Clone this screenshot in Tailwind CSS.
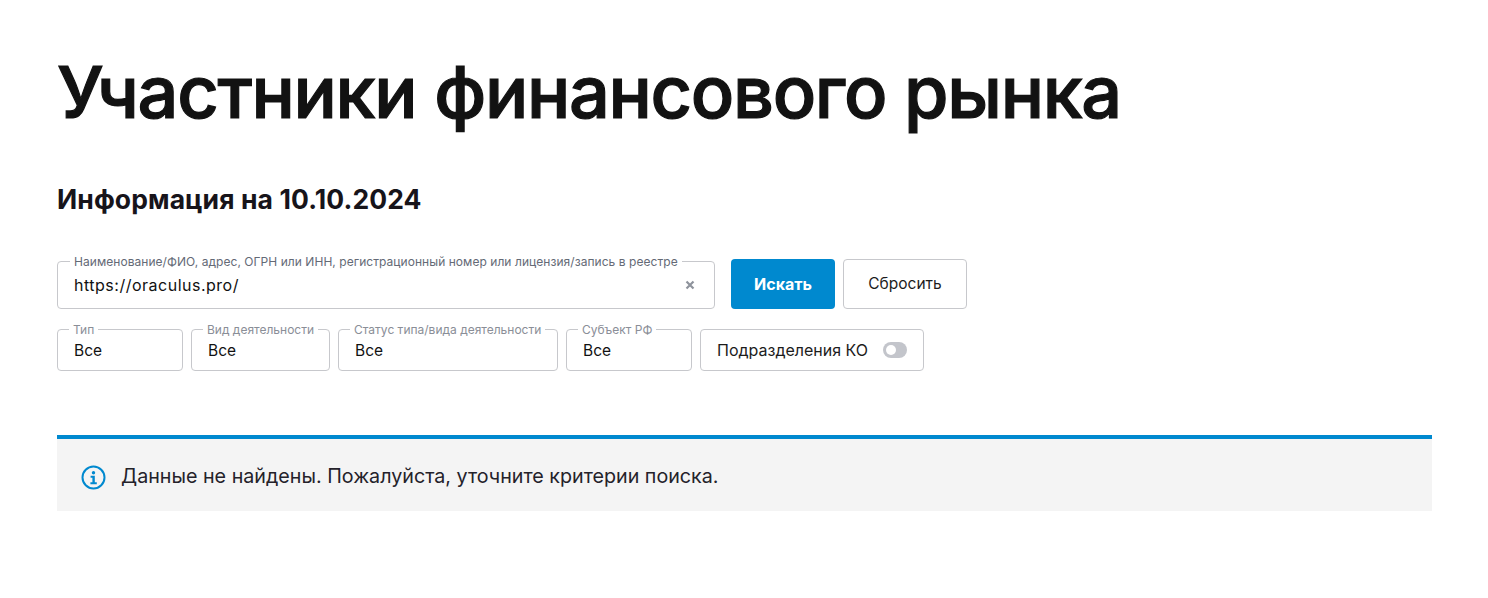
<!DOCTYPE html>
<html lang="ru">
<head>
<meta charset="utf-8">
<script src="https://cdn.jsdelivr.net/npm/@tailwindcss/browser@4"></script>
</head>
<body class="bg-white font-['Inter','Noto_Sans',sans-serif] text-[#111]">
<main class="w-[1488px] h-[598px] overflow-hidden pl-[57px] pr-[56px]">
  <h1 class="pt-[50px] h-[132px] text-[72px] leading-[84px] font-medium [-webkit-text-stroke:1.2px_#121212] text-[#121212] tracking-[-1.3px] whitespace-nowrap">Участники финансового рынка</h1>
  <h2 class="mt-[49px] h-[36px] text-[26.5px] leading-[36px] font-bold text-[#17141a] tracking-[0.1px] whitespace-nowrap">Информация на 10.10.2024</h2>
  <div class="mt-[42px] flex items-end h-[50px]">
    <div class="relative w-[658px] h-[48px] border border-[#c7c8cc] rounded-[4px]">
      <span class="absolute left-[12px] -top-[7px] bg-white px-[4px] text-[12px] tracking-[0.05px] leading-[14px] text-[#646a76] whitespace-nowrap">Наименование/ФИО, адрес, ОГРН или ИНН, регистрационный номер или лицензия/запись в реестре</span>
      <span class="absolute left-[16px] top-[13px] text-[16px] tracking-[0.5px] leading-[20px] text-[#111]">https://oraculus.pro/</span>
      <svg class="absolute left-[627px] top-[18px]" width="10" height="10" viewBox="0 0 10 10"><path d="M1.5 1.5l7 7M8.5 1.5l-7 7" stroke="#8e939c" stroke-width="2.2"/></svg>
    </div>
    <button class="ml-[16px] w-[104px] h-[50px] rounded-[4px] bg-[#0089cf] text-white text-[16px] font-bold">Искать</button>
    <button class="ml-[8px] w-[124px] h-[50px] rounded-[4px] border border-[#c7c8cc] bg-white text-[#1c1c1c] text-[15.5px]">Сбросить</button>
  </div>
  <div class="mt-[20px] flex gap-[8px] h-[42px]">
    <div class="relative w-[126px] border border-[#c7c8cc] rounded-[4px]">
      <span class="absolute left-[11px] -top-[7px] bg-white px-[4px] text-[12px] leading-[14px] text-[#8a8e97] whitespace-nowrap">Тип</span>
      <span class="absolute left-[16px] top-[11px] text-[15.5px] leading-[20px]">Все</span>
    </div>
    <div class="relative w-[139px] border border-[#c7c8cc] rounded-[4px]">
      <span class="absolute left-[11px] -top-[7px] bg-white px-[4px] text-[12px] leading-[14px] text-[#8a8e97] whitespace-nowrap">Вид деятельности</span>
      <span class="absolute left-[16px] top-[11px] text-[15.5px] leading-[20px]">Все</span>
    </div>
    <div class="relative w-[220px] border border-[#c7c8cc] rounded-[4px]">
      <span class="absolute left-[11px] -top-[7px] bg-white px-[4px] text-[12px] leading-[14px] text-[#8a8e97] whitespace-nowrap">Статус типа/вида деятельности</span>
      <span class="absolute left-[16px] top-[11px] text-[15.5px] leading-[20px]">Все</span>
    </div>
    <div class="relative w-[126px] border border-[#c7c8cc] rounded-[4px]">
      <span class="absolute left-[11px] -top-[7px] bg-white px-[4px] text-[12px] leading-[14px] text-[#8a8e97] whitespace-nowrap">Субъект РФ</span>
      <span class="absolute left-[16px] top-[11px] text-[15.5px] leading-[20px]">Все</span>
    </div>
    <div class="w-[224px] border border-[#c7c8cc] rounded-[4px] flex items-center pl-[16px] gap-[15px]">
      <span class="text-[16px] leading-[20px] text-[#1c1c1c] whitespace-nowrap">Подразделения КО</span>
      <span class="w-[24px] h-[16px] rounded-full bg-[#c3c5cb] flex items-center pl-[3px]"><span class="w-[10px] h-[10px] rounded-full bg-white"></span></span>
    </div>
  </div>
  <div class="mt-[64px] w-[1375px] h-[76px] border-t-4 border-[#0089cf] bg-[#f4f4f4] flex items-center pl-[24px] gap-[15px]">
    <svg width="25" height="25" viewBox="0 0 25 25" class="mt-[4px]" fill="none"><circle cx="12.5" cy="12.5" r="11" stroke="#0089cf" stroke-width="2"/><circle cx="12.5" cy="7.8" r="1.7" fill="#0089cf"/><path d="M9.6 10.8h4.2v6.4h2v2H9.4v-2h2v-4.4H9.6z" fill="#0089cf"/></svg>
    <span class="text-[19.7px] leading-[26px] text-[#24222a] whitespace-nowrap mt-[2px]">Данные не найдены. Пожалуйста, уточните критерии поиска.</span>
  </div>
</main>
</body>
</html>
